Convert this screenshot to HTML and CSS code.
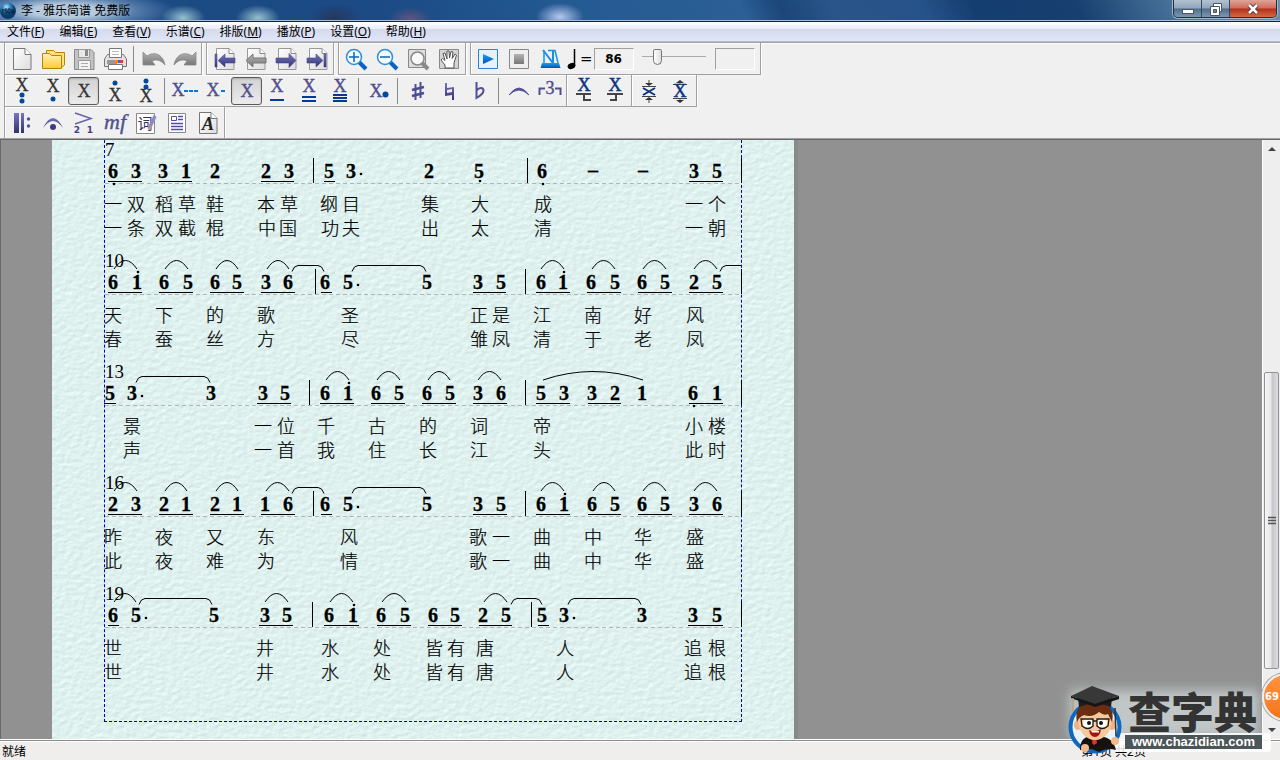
FILE: index.html
```html
<!DOCTYPE html>
<html lang="zh-CN">
	<head>
		<meta charset="utf-8">
		<title>李 - 雅乐简谱 免费版</title>
		<link rel="stylesheet" href="styles.css">
	</head>

	<body>
		<svg class="defs" aria-hidden="true">
			<defs>
				<linearGradient id="gPaper" x1="0" y1="0" x2="1" y2="1"><stop offset="0" stop-color="#fff"/><stop offset="1" stop-color="#ddd"/></linearGradient>
				<linearGradient id="gViolet" x1="0" y1="0" x2="0" y2="1"><stop offset="0" stop-color="#7676c4"/><stop offset="1" stop-color="#32326c"/></linearGradient>
				<linearGradient id="gGray" x1="0" y1="0" x2="0" y2="1"><stop offset="0" stop-color="#b4b4b4"/><stop offset="1" stop-color="#777"/></linearGradient>
				<linearGradient id="gBlue" x1="0" y1="0" x2="0" y2="1"><stop offset="0" stop-color="#19a0f4"/><stop offset="1" stop-color="#0450b4"/></linearGradient>
				<linearGradient id="gYellow" x1="0" y1="0" x2="0" y2="1"><stop offset="0" stop-color="#fff3b0"/><stop offset="1" stop-color="#ffc93c"/></linearGradient>
				<radialGradient id="gBall" cx=".4" cy=".25"><stop offset="0" stop-color="#b9e4fb"/><stop offset=".5" stop-color="#2f86c2"/><stop offset="1" stop-color="#0b3c6c"/></radialGradient>
				<g id="sheet"><path d="M4.500 1.500H17l5 5V22.500H4.500z" fill="url(#gPaper)" stroke="#999"/><path d="M17 1.500V6.500H22" fill="#fff" stroke="#888"/></g>
				<filter id="grain" x="0" y="0" width="100%" height="100%" color-interpolation-filters="sRGB">
					<feTurbulence type="fractalNoise" baseFrequency="0.17 0.24" numOctaves="3" seed="7"/>
					<feDiffuseLighting lighting-color="#def0ee" surfaceScale="0.250" diffuseConstant="1.160"><feDistantLight azimuth="235" elevation="60"/></feDiffuseLighting>
				</filter>
			</defs>
		</svg>

		<header class="titlebar">
			<svg class="app-icon" width="16" height="16" viewBox="0 0 16 16"><circle cx="8" cy="8" r="8" fill="url(#gBall)"/><path d="M3 6v4M2 7l1-1M7 6H5v2h2v2H5M8 6h2v4H8zM12 6v4h2V8h-2" fill="none" stroke="#0a2340"/></svg>
			<h1>李 - 雅乐简谱 免费版</h1>
			<div class="winbtns">
				<button class="min" aria-label="最小化"><svg width="14" height="12"><rect x="1.500" y="6.500" width="11" height="4" fill="#fff" stroke="#4a5568"/></svg></button>
				<button class="max" aria-label="还原"><svg width="14" height="14"><path d="M4.500 1.500h8v8h-8z" fill="#fff" stroke="#4a5568"/><path d="M1.500 4.500h9v9h-9z" fill="#fff" stroke="#4a5568"/><path d="M4.500 7.500h3v3h-3z" fill="#6d87a3" stroke="#4a5568"/></svg></button>
				<button class="close" aria-label="关闭"><svg width="14" height="12"><path d="M3 2l8 8M11 2l-8 8" stroke="#533" stroke-width="4.500"/><path d="M3 2l8 8M11 2l-8 8" stroke="#fff" stroke-width="2.500"/></svg></button>
			</div>
		</header>

		<nav class="menubar">
			<a href="#">文件(<u>F</u>)</a>
			<a href="#">编辑(<u>E</u>)</a>
			<a href="#">查看(<u>V</u>)</a>
			<a href="#">乐谱(<u>C</u>)</a>
			<a href="#">排版(<u>M</u>)</a>
			<a href="#">播放(<u>P</u>)</a>
			<a href="#">设置(<u>O</u>)</a>
			<a href="#">帮助(<u>H</u>)</a>
		</nav>

		<div class="toolbars">
			<div class="toolbar">
				<div class="group">
					<button aria-label="新建"><svg><path d="M3.500 1.500H15l6 6V22.500H3.500z" fill="url(#gPaper)" stroke="#777"/><path d="M15 1.500V7.500H21" fill="#fff" stroke="#777"/></svg></button>
					<button aria-label="打开"><svg><path d="M5.500 6V3.500h7l2 2H23.500V18L20 21" fill="#ffe27a" stroke="#b98500"/><path d="M1.500 6.500h7l2 2H20.500V21.500H1.500z" fill="url(#gYellow)" stroke="#b98500"/></svg></button>
					<button aria-label="保存"><svg><path d="M2.500 2.500H19l3 3V22.500H2.500z" fill="#c4c4c4" stroke="#888"/><path d="M6.500 2.500h11v8h-11z" fill="#e8e8e8" stroke="#999"/><path d="M13 3h3v6h-3z" fill="#888"/><path d="M6.500 13.500h12v9h-12z" fill="#f4f4f4" stroke="#999"/><path d="M9 16.500h7M9 19.500h7" stroke="#aaa"/></svg></button>
					<button aria-label="打印"><svg><path d="M6.500 1.500h12v9h-12z" fill="#fff" stroke="#777"/><path d="M9 4.500h7M9 7.500h7" stroke="#bbb"/><path d="M1.500 12l3-4.500h2v3h12v-3h2l3 4.500v7.500h-22z" fill="#e2e2e2" stroke="#777"/><path d="M4 13h10v4H4z" fill="#999"/><path d="M12 13h3v3h-3z" fill="#f80"/><path d="M15 13h2v3h-2z" fill="#2a6be0"/><path d="M17 13h3v3h-3z" fill="#e33"/><path d="M5.500 17.500h14v5h-14z" fill="#fff" stroke="#777"/></svg></button>
					<span class="sep"></span>
					<button aria-label="撤销"><svg><path d="M1 5l4 4C12 4 21 7 23 18c-4-5-9-6-13-4l3 4H1z" fill="url(#gGray)" stroke="#888" stroke-width=".8"/></svg></button>
					<button aria-label="重做"><svg><path d="M23 5l-4 4C12 4 3 7 1 18c4-5 9-6 13-4l-3 4h12z" fill="url(#gGray)" stroke="#888" stroke-width=".8"/></svg></button>
				</div>
				<div class="group">
					<button aria-label="首页"><svg><use href="#sheet"/><path d="M3 7h2v13H3zM6 13.500L13 7v4h10v5H13v4z" fill="url(#gViolet)" stroke="#48488c" stroke-width=".6"/></svg></button>
					<button aria-label="上一页"><svg><use href="#sheet"/><path d="M3 13.500L10 7v4h13v5H10v4z" fill="url(#gGray)" stroke="#777"/></svg></button>
					<button aria-label="下一页"><svg><use href="#sheet"/><path d="M22 13.500L15 6.500v4.500H2v5h13v4.500z" fill="url(#gViolet)" stroke="#48488c" stroke-width=".6"/></svg></button>
					<button aria-label="末页"><svg><use href="#sheet"/><path d="M19 7h2v13h-2zM18 13.500L11 7v4H2v5h9v4z" fill="url(#gViolet)" stroke="#48488c" stroke-width=".6"/></svg></button>
				</div>
				<div class="group">
					<button aria-label="放大"><svg><path d="M15 15l7 7" stroke="#0a62c4" stroke-width="4"/><circle cx="10" cy="10" r="7.500" fill="#f4fbff" stroke="#2a8fe0" stroke-width="1.500"/><path d="M5 10h10M10 5v10" stroke="#0a62c4" stroke-width="1.500"/></svg></button>
					<button aria-label="缩小"><svg><path d="M15 15l7 7" stroke="#0a62c4" stroke-width="4"/><circle cx="10" cy="10" r="7.500" fill="#f4fbff" stroke="#2a8fe0" stroke-width="1.500"/><path d="M5 10h10" stroke="#0a62c4" stroke-width="1.500"/></svg></button>
					<button aria-label="整页"><svg><path d="M2.500 2.500h17v18h-17z" fill="#ddd" stroke="#888"/><path d="M16 16l6 6" stroke="#888" stroke-width="4"/><circle cx="11.500" cy="11.500" r="6.500" fill="#f8f8f8" stroke="#888" stroke-width="1.500"/></svg></button>
					<button aria-label="移动"><svg><path d="M2.500 2.500h19v19h-19z" fill="#d4d4d4" stroke="#888"/><path d="M8 21v-3l-4-5 1.500-1.500L8 13.500 6 6.500l2-.5 2 6V4h2l.5 7L14 4.500l2 .5-.8 6.500L18 7l1.500 1L17 16v5z" fill="#fff" stroke="#555"/></svg></button>
				</div>
				<div class="group">
					<button aria-label="播放"><svg><path d="M2.500 2.500h19v19h-19z" fill="#e4f2fd" stroke="#2684d0"/><path d="M7 7l11 5-11 5z" fill="url(#gBlue)"/></svg></button>
					<button aria-label="停止"><svg><path d="M2.500 2.500h19v19h-19z" fill="#eee" stroke="#888"/><path d="M7 7h10v10H7z" fill="url(#gGray)"/></svg></button>
					<button aria-label="节拍器"><svg><path d="M6 16V3.500M10 3.500h7L20 16" fill="none" stroke="#1690ea" stroke-width="1.500"/><path d="M5 3l10 13V4" fill="none" stroke="#1690ea" stroke-width="2"/><path d="M4 16h17l1.500 5h-20z" fill="url(#gBlue)"/></svg></button>
					<label class="tempo" for="tempo"><svg width="9" height="22" viewBox="0 0 9 22"><path d="M7.500 1v17" stroke="#000" stroke-width="1.500"/><ellipse cx="4.500" cy="18" rx="4" ry="3" transform="rotate(-20 4.500 18)"/></svg><span>=</span></label>
					<input type="text" id="tempo" class="tempo-box" value="86">
					<input type="range" class="speed" min="0" max="100" value="20" aria-label="速度">
					<input type="text" class="time-box" aria-label="时间" readonly>
				</div>
			</div>

			<div class="toolbar">
				<div class="group">
					<button aria-label="低两个八度"><svg class="xk"><text x="12" y="12">X</text><circle cx="12" cy="16" r="2.500"/><circle cx="12" cy="22" r="2.500"/></svg></button>
					<button aria-label="低八度"><svg class="xk"><text x="12" y="13">X</text><circle cx="12" cy="20" r="2.500"/></svg></button>
					<button class="on" aria-label="中音"><svg class="xk"><text x="12" y="18">X</text></svg></button>
					<button aria-label="高八度"><svg class="xk"><text x="12" y="22">X</text><circle cx="12" cy="4" r="2.500"/></svg></button>
					<button aria-label="高两个八度"><svg class="xk"><text x="12" y="23">X</text><circle cx="12" cy="2" r="2.500"/><circle cx="12" cy="8" r="2.500"/></svg></button>
					<span class="sep"></span>
					<button aria-label="全音符"><svg class="xv"><text x="5" y="17">X</text><path class="dash" d="M11 12h4M16 12h4M21 12h4"/></svg></button>
					<button aria-label="二分音符"><svg class="xv"><text x="9" y="17">X</text><path class="dash" d="M17 12h4"/></svg></button>
					<button class="on" aria-label="四分音符"><svg class="xv"><text x="12" y="18">X</text></svg></button>
					<button aria-label="八分音符"><svg class="xv"><text x="11" y="13">X</text><path d="M4 21h14"/></svg></button>
					<button aria-label="十六分音符"><svg class="xv"><text x="12" y="13">X</text><path d="M5 18h14M5 22h14"/></svg></button>
					<button aria-label="三十二分音符"><svg class="xv"><text x="12" y="13">X</text><path d="M5 16h14M5 19h14M5 22h14"/></svg></button>
					<span class="sep"></span>
					<button aria-label="附点"><svg class="xv"><text x="9" y="18">X</text><circle cx="18.500" cy="15.500" r="3"/></svg></button>
					<span class="sep"></span>
					<button aria-label="升号"><svg><path d="M9.500 5v16M14.500 3v16" stroke="#50509a" stroke-width="2"/><path d="M6 11l12-3M6 17l12-3" stroke="#4c4c90" stroke-width="2.500"/></svg></button>
					<button aria-label="还原号"><svg><path d="M8 4h2v5l7-1v13h-2v-5l-7 1zM10 11v3l5-1v-3z" fill="url(#gViolet)" fill-rule="evenodd"/></svg></button>
					<button aria-label="降号"><svg><path d="M8.500 3v16q7-4 7-7.500c0-3-4-3.500-7 0" fill="none" stroke="#50509a" stroke-width="2"/></svg></button>
					<span class="sep"></span>
					<button aria-label="连音线"><svg><path d="M2 16Q12 2 22 16Q12 6 2 16z" fill="#50509a" stroke="#50509a"/></svg></button>
					<button aria-label="三连音"><svg class="xv trip"><path d="M1.500 16V9.500H7M17 9.500h5.500V16"/><text x="12" y="15">3</text></svg></button>
				</div>
				<div class="group joined">
					<button aria-label="符尾左"><svg class="xn"><text x="12" y="12">X</text><path d="M4 15h15M12 15v6h7"/></svg></button>
					<button aria-label="符尾右"><svg class="xn"><text x="12" y="12">X</text><path d="M4 15h16M13 15v6H7"/></svg></button>
				</div>
				<div class="group joined">
					<button aria-label="压缩间距"><svg class="xs"><path d="M12 1v4M12 20v4M5 7.500h14M5 17.500h14"/><path d="M8 4h8l-4 3zM8 21h8l-4-3z" class="tri"/><path d="M6 9l12 7M18 9L6 16" class="blue"/></svg></button>
					<button aria-label="展开间距"><svg class="xs"><path d="M12 2v3M12 20v3M5 5.500h14M5 19.500h14"/><path d="M8 4h8l-4-3zM8 21h8l-4 3z" class="tri"/><text x="12" y="18">X</text></svg></button>
				</div>
			</div>

			<div class="toolbar">
				<div class="group">
					<button aria-label="小节线"><svg><path d="M4 2h5v20H4zM11 2h3v20h-3z" fill="url(#gViolet)"/><circle cx="18.500" cy="8" r="1.700" fill="#50509a"/><circle cx="18.500" cy="15" r="1.700" fill="#50509a"/></svg></button>
					<button aria-label="延长记号"><svg><path d="M2 17Q12 -3 22 17Q12 3 2 17z" fill="url(#gViolet)"/><circle cx="12" cy="16" r="3" fill="#3c3c7c"/></svg></button>
					<button aria-label="指法"><svg class="fing"><path d="M3 2l16 5.500L3 13" fill="none" stroke="#6464ac" stroke-width="1.500"/><text x="5" y="22">2</text><text x="18" y="22">1</text></svg></button>
					<button aria-label="力度"><svg class="dyn"><text x="12" y="18">mf</text></svg></button>
					<button aria-label="歌词"><svg class="ci"><path d="M2.500 2.500h18v20h-18z" fill="#fff" stroke="#888"/><text x="11" y="18">词</text><path d="M21 5l-6 13" stroke="#8a8acb" stroke-width="3.500"/><path d="M16 14l-2 6 4-4z" fill="#e89050"/></svg></button>
					<button aria-label="文本"><svg><path d="M3.500 2.500h17v19h-17z" fill="#fff" stroke="#888"/><path d="M6.500 5.500h5v4h-5z" fill="none" stroke="#50509a"/><path d="M13 5.500h5M13 8.500h5M6 12.500h12M6 15.500h12M6 18.500h12" stroke="#50509a" stroke-width="1.500"/></svg></button>
					<button aria-label="字体"><svg class="fnt"><path d="M3.500 1.500H15l6 6V22.500H3.500z" fill="url(#gPaper)" stroke="#777"/><path d="M15 1.500V7.500H21" fill="#fff" stroke="#777"/><text x="12" y="19">A</text></svg></button>
				</div>
			</div>
		</div>

		<main class="workspace">
			<section class="page">
				<svg class="texture" aria-hidden="true"><rect width="100%" height="100%" filter="url(#grain)"/></svg>
				<div class="frame" id="score"></div>
			</section>
			<div class="scrollbar">
				<button class="up" aria-label="向上滚动"><svg width="8" height="5"><path d="M0 5l4-4 4 4z" fill="#444"/></svg></button>
				<div class="track"><div class="thumb"><svg width="8" height="10"><path d="M0 1.500h8M0 4.500h8M0 7.500h8" stroke="#555" stroke-width="1.500"/></svg></div></div>
				<button class="down" aria-label="向下滚动"><svg width="8" height="5"><path d="M0 0l4 4 4-4z" fill="#444"/></svg></button>
			</div>
		</main>

		<footer class="statusbar">
			<span>就绪</span>
			<span class="pages">第1页 共2页</span>
		</footer>

		<div class="badge">69</div>

		<div class="watermark">
			<svg class="mascot" width="62" height="68" viewBox="0 0 62 68">
				<circle cx="29" cy="41" r="24.500" fill="#e9f3f8" stroke="#0d68c0" stroke-width="4"/>
				<path d="M14 64c0-12 7-14 14-14s19 0 22 14q-9-3-17 2-9-5-19-2z" fill="#171210"/>
				<path d="M24 50l4 6 6-6z" fill="#fff"/><path d="M27 52l3 0 1 5-3 2-2-2z" fill="#d33"/>
				<ellipse cx="12" cy="39" rx="4" ry="5" fill="#eeb183"/><ellipse cx="46" cy="39" rx="4" ry="5" fill="#eeb183"/>
				<path d="M12 33c0 13 8 21 17 21s17-8 17-21q-4-8-17-8t-17 8z" fill="#f8c99c"/>
				<path d="M11 36C8 20 18 15 29 16c14 0 20 8 17 20l-4-8q-4 2-9-2-7 6-15 3-5 2-7 7z" fill="#6b2d12"/>
				<circle cx="22" cy="37" r="5" fill="#fff"/><circle cx="36" cy="37" r="5" fill="#fff"/>
				<circle cx="23" cy="37" r="2" fill="#111"/><circle cx="35" cy="37" r="2" fill="#111"/>
				<path d="M15 33h12v7q-5 5-11 0zM31 33h12l-1 7q-6 5-11 0zM27 35h4" fill="none" stroke="#1c1a18" stroke-width="1.300"/>
				<path d="M23 44q6 3 12-1-1 8-6 8t-6-7z" fill="#a21414"/><path d="M25 45h8v1.500h-7z" fill="#fff"/>
				<path d="M12 12l1 9q16-7 32 0l1-9z" fill="#1d1c1c"/><path d="M5 10L26 0l27 10-24 8z" fill="#393838"/><path d="M29 18l24-8v3l-24 8L5 12v-2z" fill="#151515"/>
				<path d="M7 12l0 14" stroke="#b8a080" stroke-width="1.500"/>
				<path d="M49 22l1 28" stroke="#333" stroke-width="1.500"/><circle cx="49" cy="55" r="4" fill="#f2b98d"/><circle cx="19" cy="62" r="4" fill="#f2b98d"/>
			</svg>
			<div class="brand">
				<strong>查字典</strong>
				<span>www.chazidian.com</span>
			</div>
		</div>

		<script src="score.js"></script>
	</body>
</html>
```
FILE: styles.css
```css
*{
	box-sizing: border-box;
}
html, body{
	margin: 0;
	height: 100%;
}
body{
	display: flex;
	flex-direction: column;
	position: relative;
	overflow: hidden;
	background: #f0f0f0;
	font: 12px/16px "Noto Sans", "Noto Sans CJK SC", sans-serif;
	color: #000;
}
button{
	border: 0;
	padding: 0;
	background: none;
	display: flex;
	align-items: center;
	justify-content: center;
}
.defs{
	position: absolute;
	width: 0;
	height: 0;
}

/* title bar */
.titlebar{
	display: flex;
	align-items: center;
	flex: none;
	height: 22px;
	padding: 0 3px 0 0;
	border-bottom: 1px solid #14233c;
	box-shadow: inset 0 -1px #a9bdd6;
	background:
		radial-gradient(ellipse 110px 22px at 65px 11px, rgba(190,208,226,0.95) 30%, rgba(120,155,195,0.6) 65%, transparent),
		radial-gradient(ellipse 22px 13px at 183px 18px, rgba(165,205,215,0.9), transparent),
		radial-gradient(ellipse 22px 13px at 258px 18px, rgba(165,205,215,0.9), transparent),
		radial-gradient(ellipse 22px 12px at 410px 19px, rgba(105,85,125,0.9), transparent),
		radial-gradient(ellipse 24px 14px at 560px 17px, rgba(190,205,245,0.95), transparent),
		radial-gradient(ellipse 26px 16px at 335px 19px, rgba(40,50,85,0.8), transparent),
		linear-gradient(65deg, #1d4b83 0%, #1b4a84 30%, #245a92 45%, #2b5f95 58%, #1c4679 61%, #29558a 65%, #26528a 72%, #153e70 76%, #173f70 84%, #4b759c 92%, #6f8fab 100%);
}
.app-icon{
	flex: none;
}
.titlebar h1{
	flex: 1;
	margin: 0 0 0 5px;
	font-size: 12px;
	font-weight: normal;
	line-height: 20px;
}
.winbtns{
	display: flex;
	align-self: flex-start;
	height: 18px;
	border: 1px solid #1e2e44;
	border-top: 0;
	border-radius: 0 0 5px 5px;
	overflow: hidden;
	box-shadow: 0 0 0 1px #a3b7ca;
}
.winbtns button{
	width: 28px;
	border-right: 1px solid #33475f;
	background: linear-gradient(#b3c2d0, #8fa5b9 48%, #4f6d8c 52%, #7d97b0);
}
.winbtns .close{
	width: 46px;
	border-right: 0;
	background: linear-gradient(#dea499, #cf6b58 48%, #b0301a 52%, #d46a44);
}

/* menu */
.menubar{
	display: flex;
	flex: none;
	gap: 15px;
	height: 20px;
	padding: 0 7px;
	border-bottom: 1px solid #b6bccc;
	background: linear-gradient(#fff, #e9edf6 35%, #d4daec 36%, #e0e5f7);
}
.menubar a{
	color: #000;
	text-decoration: none;
	line-height: 19px;
}

/* toolbars */
.toolbars{
	flex: none;
	border-top: 1px solid #a0a0a0;
	border-bottom: 1px solid #a0a0a0;
	box-shadow: inset 0 1px #fff;
}
.toolbar{
	display: flex;
	gap: 4px;
	height: 32px;
	padding-left: 4px;
}
.toolbar:last-child{
	height: 31px;
}
.toolbar:last-child .group{
	border-bottom: 0;
}
.group{
	display: flex;
	align-items: center;
	padding: 0 1px;
	border-left: 1px solid #a0a0a0;
	border-right: 1px solid #a0a0a0;
	border-bottom: 1px solid #a0a0a0;
	box-shadow: inset 1px 1px #fff, 1px 0 #fff;
}
.joined{
	margin-left: -4px;
	border-left: 0;
}
.group button{
	width: 31px;
	height: 28px;
	border-radius: 3px;
}
.group button svg{
	width: 24px;
	height: 24px;
	overflow: visible;
}
.group .on{
	border: 1px solid #5c5c5c;
	background: linear-gradient(#d2d2d2, #ececec);
	box-shadow: inset 0 1px 2px #aaa;
}
.sep{
	width: 1px;
	height: 26px;
	margin: 0 4px 0 3px;
	background: #888;
}
.group svg text{
	font-family: "Liberation Serif", serif;
	font-size: 18px;
	text-anchor: middle;
}
.xk text{
	fill: #333;
	stroke: #333;
	stroke-width: 0.3px;
}
.xk circle, .xv circle{
	fill: #04489c;
}
.xv text{
	fill: #50508f;
	stroke: #50508f;
	stroke-width: 0.4px;
}
.xv path{
	stroke: #003c96;
	stroke-width: 2px;
	fill: none;
}
.xv .dash{
	stroke: #0878d8;
}
.trip path{
	stroke: #50508f;
}
.xn text, .xs text{
	fill: #0c3380;
	stroke: #0c3380;
	stroke-width: 0.5px;
}
.xn path, .xs path{
	stroke: #444;
	stroke-width: 2px;
	fill: none;
}
.xs path{
	stroke-width: 1px;
}
.xs .tri{
	fill: #333;
	stroke: none;
}
.xs .blue{
	stroke: #0c3380;
	stroke-width: 2px;
}
.group .fing text{
	font: bold 9px "DejaVu Sans", sans-serif;
	fill: #404088;
}
.group .dyn text{
	font-style: italic;
	font-size: 22px;
	fill: #50508f;
	stroke: #50508f;
	stroke-width: 0.4px;
}
.group .ci text{
	font: 15px "Noto Sans CJK SC", sans-serif;
	fill: #333366;
}
.group .fnt text{
	font-weight: bold;
	font-style: italic;
	fill: #222;
}
.tempo{
	display: flex;
	align-items: center;
	gap: 4px;
	margin-left: 2px;
	font: 15px/20px "DejaVu Sans", sans-serif;
}
.tempo-box, .time-box{
	width: 40px;
	height: 22px;
	margin: 0 0 0 1px;
	padding: 0;
	border: 1px solid #a0a0a0;
	border-right-color: #fff;
	border-bottom-color: #fff;
	background: #f0f0f0;
	text-align: center;
	font: bold 12px "DejaVu Sans", sans-serif;
}
.speed{
	appearance: none;
	width: 64px;
	height: 20px;
	margin: 0 9px 4px 8px;
	background: linear-gradient(#aaa, #aaa) center / 100% 1px no-repeat;
}
.speed::-webkit-slider-thumb{
	appearance: none;
	width: 9px;
	height: 16px;
	border: 1px solid #777;
	border-radius: 2px 2px 5px 5px;
	background: linear-gradient(90deg, #fff, #ddd);
}
.time-box{
	margin: 0 4px 0 0;
}

/* score */
.workspace{
	flex: 1;
	display: flex;
	min-height: 0;
	padding-left: 52px;
	overflow: hidden;
	border-top: 1px solid #696969;
	box-shadow: inset 1px 0 #696969;
	background: #919191;
}
.page{
	position: relative;
	flex: none;
	width: 742px;
	padding: 0 52px 17px;
	background: #e0efee;
	box-shadow: 4px 0 #898989;
}
.texture{
	position: absolute;
	top: 0;
	left: 0;
	width: 100%;
	height: 100%;
}
.frame{
	position: relative;
	height: 100%;
	border: 1px dashed #0000c8;
	border-top: 0;
}
.system{
	display: block;
	width: 636px;
	height: 111px;
	overflow: visible;
}
.system path, .system line{
	fill: none;
	stroke: #000;
}
.system .baseline{
	stroke: #b4b4b8;
	stroke-dasharray: 4 3;
}
.note{
	font: bold 20px "Liberation Serif", serif;
	text-anchor: middle;
	stroke: #000;
	stroke-width: 0.3px;
}
.lyric{
	font: 300 18px "Noto Sans CJK SC", sans-serif;
	text-anchor: middle;
	stroke: #000;
	stroke-width: 0.2px;
}
.measure{
	font: 19px "Liberation Serif", serif;
}
.scrollbar{
	display: flex;
	flex-direction: column;
	width: 18px;
	margin-left: auto;
	border-left: 1px solid #fff;
	background: #eee;
}
.scrollbar button{
	flex: none;
	height: 17px;
}
.track{
	flex: 1;
	display: flex;
	flex-direction: column;
	justify-content: flex-end;
	padding: 0 1px 53px;
}
.thumb{
	display: flex;
	align-items: center;
	justify-content: center;
	height: 58%;
	border: 1px solid #929292;
	border-radius: 2px;
	background: linear-gradient(90deg, #f6f6f6, #e8e8ea 45%, #c6c7cc 55%, #dcdce0);
}

/* status bar */
.statusbar{
	display: flex;
	flex: none;
	justify-content: space-between;
	height: 21px;
	padding: 4px 134px 0 2px;
	border-top: 1px solid #fff;
	box-shadow: inset 0 1px #8c8c8c, inset 0 2px #fff;
	background: #f0eded;
}

/* floating things over the window */
.badge{
	position: absolute;
	right: -30px;
	bottom: 39px;
	width: 48px;
	height: 48px;
	padding-left: 1px;
	border: 2px solid #eee;
	border-radius: 50%;
	background: linear-gradient(#ff9440, #f47418);
	box-shadow: 0 0 0 1px #999;
	color: #fff;
	font: bold 10px/44px "DejaVu Sans", sans-serif;
}
.watermark{
	position: absolute;
	right: 9px;
	bottom: 8px;
	display: flex;
	align-items: flex-end;
}
.watermark::before{
	content: "";
	position: absolute;
	inset: 4px 12px 14px 4px;
	background: rgba(225,235,235,0.6);
	filter: blur(6px);
}
.mascot{
	position: relative;
	z-index: 1;
	margin: 0 -14px -2px 0;
}
.brand{
	position: relative;
	display: flex;
	flex-direction: column;
	align-items: center;
}
.brand strong{
	font: 900 43px/46px "Noto Sans CJK SC", sans-serif;
	color: #333;
}
.brand span{
	padding: 0 7px;
	border: 2px solid rgba(255,255,255,0.85);
	border-width: 2px 9px 3px 11px;
	background: #4c5557;
	background-clip: padding-box;
	border-radius: 4px;
	color: #fff;
	font: bold 13px/14px "Liberation Sans", sans-serif;
}
```
FILE: score.js
```js
// note: x:digit, then ' = high dot, , = low dot, . = dotted
var systems = [
	{
		measure: 7,
		notes: "113:6, 136:3 163:3 186:1 215:2 266:2 289:3 329:5 351:3. 429:2 479:5, 542:6, 593:- 643:- 694:3 717:5",
		lines: "108-142 159-192 261-294 324-335 689-723",
		bars: "313 527 741",
		slurs: "",
		ties: "",
		words: [
			"113:一 136:双 164:稻 187:草 215:鞋 266:本 289:草 329:纲 351:目 430:集 480:大 543:成 694:一 717:个",
			"113:一 136:条 164:双 187:截 215:棍 267:中 288:国 330:功 351:夫 430:出 480:太 543:清 694:一 717:朝"
		]
	},
	{
		measure: 10,
		notes: "113:6 137:1' 164:6 188:5 215:6 237:5 266:3 288:6 325:6 348:5. 427:5 478:3 501:5 541:6 563:1' 591:6 615:5 642:6 665:5 694:2 717:5",
		lines: "108-142 159-193 210-244 261-295 321-332 473-506 536-570 587-621 638-672 689-723",
		bars: "315 525 741",
		slurs: "114-137 165-188 216-238 267-289 541-564 592-615 643-666 694-717",
		ties: "292-324 352-426 720-",
		words: [
			"113:天 164:下 215:的 266:歌 350:圣 479:正 501:是 542:江 593:南 643:好 695:风",
			"113:春 164:蚕 215:丝 266:方 350:尽 479:雏 501:凤 542:清 593:于 643:老 695:凤"
		]
	},
	{
		measure: 13,
		notes: "110:5 132:3. 211:3 263:3 285:5 325:6 348:1' 376:6 399:5 427:6 450:5 478:3 501:6 541:5 564:3 592:3 615:2 642:1 693:6, 717:1",
		lines: "104-116 257-291 320-354 371-405 422-456 473-507 536-570 588-621 689-723",
		bars: "309 525 741",
		slurs: "326-349 377-400 428-450 478-501 543-643",
		ties: "136-210",
		words: [
			"132:景 263:一 286:位 326:千 377:古 428:的 479:词 542:帝 694:小 717:楼",
			"132:声 263:一 286:首 326:我 377:住 428:长 479:江 542:头 694:此 717:时"
		]
	},
	{
		measure: 16,
		notes: "113:2 136:3 164:2 186:1 215:2 237:1 265:1 288:6 325:6 348:5. 427:5 478:3 501:5 541:6 564:1' 592:6 615:5 642:6 665:5 694:3 717:6",
		lines: "108-142 159-193 210-244 261-295 321-332 473-507 536-570 588-621 638-672 689-723",
		bars: "313 525 741",
		slurs: "114-137 165-187 216-238 266-289 541-564 593-615 643-666 694-717",
		ties: "292-324 352-426",
		words: [
			"113:昨 164:夜 215:又 266:东 349:风 478:歌 501:一 542:曲 593:中 643:华 695:盛",
			"113:此 164:夜 215:难 266:为 349:情 478:歌 501:一 542:曲 593:中 643:华 695:盛"
		]
	},
	{
		measure: 19,
		notes: "113:6 136:5. 214:5 265:3 287:5 329:6 353:1' 381:6 405:5 433:6 455:5 483:2 506:5 542:5 564:3. 642:3 693:3 717:5",
		lines: "108-119 259-293 324-359 377-411 428-462 479-512 538-549 688-723",
		bars: "312 531 741",
		slurs: "114-136 265-288 330-353 382-406 484-507",
		ties: "139-212 511-542 568-641",
		words: [
			"113:世 265:井 330:水 382:处 434:皆 456:有 485:唐 565:人 693:追 717:根",
			"113:世 265:井 330:水 382:处 434:皆 456:有 485:唐 565:人 693:追 717:根"
		]
	}
];

var BASE = 38;
var RIGHT = 741;

function line(x1, y1, x2, y2, cls)
{
	return '<line class="' + cls + '" x1="' + x1 + '" y1="' + y1 + '" x2="' + x2 + '" y2="' + y2 + '"/>';
}

function dot(x, y)
{
	return '<circle cx="' + x + '" cy="' + y + '" r="1.3"/>';
}

function each(list, fn)
{
	if(list == "") return "";
	return list.split(" ").map(fn).join("");
}

function drawSystem(s)
{
	var out = '<text class="measure" x="105" y="' + (BASE - 22) + '">' + s.measure + '</text>';
	out += line(105, BASE + 5.5, RIGHT, BASE + 5.5, "baseline");

	out += each(s.bars, function(x)
	{
		return line(+x + 0.5, BASE - 20, +x + 0.5, BASE + 5, "bar");
	});

	out += each(s.lines, function(l)
	{
		var p = l.split("-");
		return line(p[0], BASE + 3.5, p[1], BASE + 3.5, "under");
	});

	out += each(s.notes, function(n)
	{
		var p = n.split(":");
		var x = +p[0];
		var digit = p[1][0];
		var mark = p[1][1];
		if(digit == "-") return '<text class="note" x="' + x + '" y="' + (BASE - 1) + '">–</text>';
		var t = '<text class="note" x="' + x + '" y="' + BASE + '">' + digit + '</text>';
		if(mark == "'") t += dot(x + 1, BASE - 17);
		if(mark == ",") t += dot(x + 1, BASE + (x == 479 ? 3 : 6));
		if(mark == ".") t += dot(x + 10, BASE - 4);
		return t;
	});

	out += each(s.slurs, function(l)
	{
		var p = l.split("-").map(Number);
		return '<path d="M' + p[0] + ' ' + (BASE - 20) + 'Q' + (p[0] + p[1]) / 2 + ' ' + (BASE - 37) + ' ' + p[1] + ' ' + (BASE - 20) + '"/>';
	});

	out += each(s.ties, function(l)
	{
		var p = l.split("-");
		var y = BASE - 23.5;
		var d = 'M' + p[0] + ' ' + (y + 6) + 'q2 -6 6 -6';
		// an open tie runs on to the end of the system
		if(p[1] == "") d += 'H' + RIGHT;
		else d += 'H' + (p[1] - 6) + 'q4 0 6 6';
		return '<path d="' + d + '"/>';
	});

	s.words.forEach(function(verse, i)
	{
		out += each(verse, function(w)
		{
			var p = w.split(":");
			return '<text class="lyric" x="' + p[0] + '" y="' + (BASE + 33 + i * 24) + '">' + p[1] + '</text>';
		});
	});

	return '<svg class="system" viewBox="105 0 636 111">' + out + '</svg>';
}

document.getElementById("score").innerHTML = systems.map(drawSystem).join("");
```
